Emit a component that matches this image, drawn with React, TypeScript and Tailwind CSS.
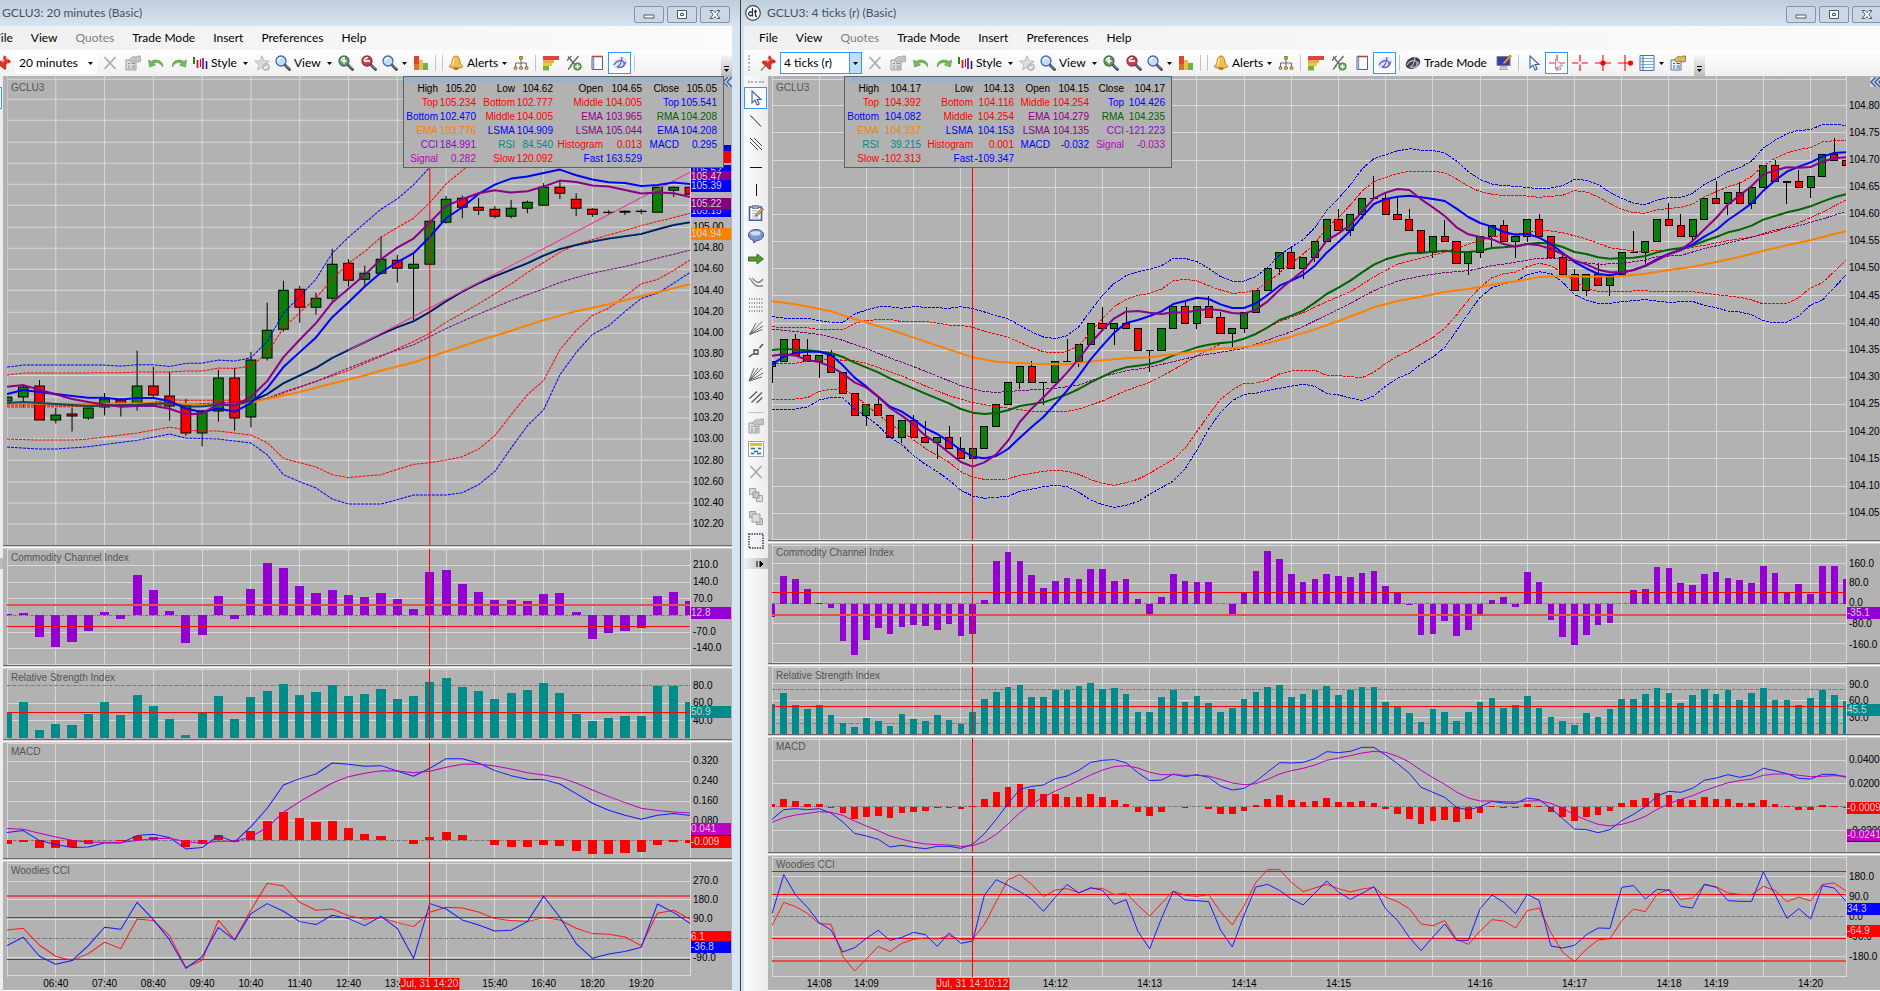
import React from "react";

type Line = { color: string; width?: number; dash?: boolean; points: number[] | string };
type Mark = { text: string; y: number };
type Tag = { text: string; y: number; color: string };
type Level = { y: number; kind: "thin" | "soft" | "dash" };
type Candle = [number, number, number, number, string];
type PanelData = {
  title: string;
  top: number;
  bottom: number;
  rows: number[];
  marks: Mark[];
  tags: Tag[];
  levels?: Level[];
  bars?: { base: number; color: string; ends: number[] };
  candles?: Candle[];
  lines?: Line[];
};
type Cell = [string, string, string];
type ChartData = {
  count: number;
  columnStep: number;
  cross: number;
  panels: PanelData[];
  times: [number, string][];
  crossTime: string;
  legend: Cell[][];
  legendCols: string[];
  legendPos: string;
  axis: string;
};

const BLUE = "#0000ff";
const RED = "#ff0000";
const PURPLE = "#8b008b";
const PLUM = "#800080";
const GREEN = "#006400";
const ORANGE = "#ff8000";
const VIOLET = "#9400d3";
const TEAL = "#008b8b";
const MAGENTA = "#bf00bf";

/* Vertical positions are in thirds of a pixel; horizontal positions are bar numbers. */

const leftCandles: Candle[] = [
  [1192, 1192, 1204, 1204, "g"], [1158, 1162, 1192, 1223, "g"], [1141, 1159, 1261, 1261, "r"], [1225, 1246, 1261, 1271, "g"],
  [1223, 1243, 1249, 1295, "r"], [1225, 1225, 1255, 1260, "g"], [1180, 1198, 1222, 1247, "g"], [1195, 1201, 1219, 1250, "r"],
  [1053, 1159, 1210, 1232, "g"], [1101, 1159, 1186, 1191, "r"], [1116, 1189, 1219, 1263, "r"], [1198, 1219, 1300, 1308, "r"],
  [1230, 1234, 1300, 1340, "g"], [1110, 1135, 1234, 1266, "g"], [1104, 1135, 1255, 1293, "r"], [1056, 1081, 1252, 1283, "g"],
  [909, 991, 1075, 1082, "g"], [843, 871, 988, 995, "g"], [858, 868, 922, 969, "r"], [879, 895, 922, 945, "g"],
  [747, 793, 895, 903, "g"], [778, 790, 841, 860, "r"], [798, 820, 838, 860, "g"], [710, 778, 820, 824, "g"],
  [765, 781, 805, 848, "r"], [762, 793, 805, 960, "g"], [660, 664, 793, 797, "g"], [588, 598, 667, 671, "g"],
  [587, 595, 622, 655, "r"], [594, 622, 631, 645, "r"], [618, 628, 649, 656, "r"], [600, 625, 649, 655, "g"],
  [602, 607, 625, 640, "g"], [549, 562, 616, 617, "g"], [543, 562, 580, 597, "r"], [580, 598, 625, 648, "r"],
  [625, 628, 643, 651, "r"], [631, 637, 638, 642, "g"], [632, 634, 637, 645, "g"], [627, 634, 635, 643, "g"],
  [562, 562, 637, 637, "g"], [560, 562, 571, 591, "g"], [562, 562, 583, 583, "r"],
];

const leftChart: ChartData = {
  count: 42,
  columnStep: 3,
  cross: 26,
  crossTime: "Jul, 31 14:20",
  axis: "w-[42px]",
  legendPos: "left-[400px]",
  legendCols: ["w-[34px]", "w-[38px]", "w-[39px]", "w-[38px]", "w-[50px]", "w-[39px]", "w-[37px]", "w-[38px]"],
  times: [
    [3, "06:40"], [6, "07:40"], [9, "08:40"], [12, "09:40"], [15, "10:40"], [18, "11:40"], [21, "12:40"], [24, "13:40"],
    [30, "15:40"], [33, "16:40"], [36, "18:20"], [39, "19:20"],
  ],
  legend: [
    [["High", "105.20", "#000"], ["Low", "104.62", "#000"], ["Open", "104.65", "#000"], ["Close", "105.05", "#000"]],
    [["Top", "105.234", RED], ["Bottom", "102.777", RED], ["Middle", "104.005", RED], ["Top", "105.541", BLUE]],
    [["Bottom", "102.470", BLUE], ["Middle", "104.005", RED], ["EMA", "103.965", PURPLE], ["RMA", "104.208", GREEN]],
    [["EMA", "103.776", ORANGE], ["LSMA", "104.909", BLUE], ["LSMA", "105.044", PURPLE], ["EMA", "104.208", BLUE]],
    [["CCI", "184.991", VIOLET], ["RSI", "84.540", TEAL], ["Histogram", "0.013", RED], ["MACD", "0.295", BLUE]],
    [["Signal", "0.282", MAGENTA], ["Slow", "120.092", RED], ["Fast", "163.529", BLUE]],
  ],
  panels: [
    {
      title: "GCLU3",
      top: 228,
      bottom: 1635,
      rows: [238, 298, 361, 427, 490, 553, 616, 682, 745, 808, 871, 937, 1000, 1063, 1127, 1192, 1255, 1318, 1382, 1447, 1510, 1573],
      marks: [
        { text: "105.00", y: 682 }, { text: "104.80", y: 745 }, { text: "104.60", y: 808 }, { text: "104.40", y: 874 },
        { text: "104.20", y: 937 }, { text: "104.00", y: 1000 }, { text: "103.80", y: 1063 }, { text: "103.60", y: 1129 },
        { text: "103.40", y: 1192 }, { text: "103.20", y: 1255 }, { text: "103.00", y: 1318 }, { text: "102.80", y: 1384 },
        { text: "102.60", y: 1447 }, { text: "102.40", y: 1510 }, { text: "102.20", y: 1573 },
      ],
      tags: [
        { text: "105.57", y: 453, color: BLUE }, { text: "105.55", y: 471, color: RED }, { text: "105.52", y: 512, color: BLUE },
        { text: "105.47", y: 532, color: PURPLE }, { text: "105.39", y: 557, color: BLUE }, { text: "105.15", y: 634, color: BLUE },
        { text: "105.22", y: 611, color: PLUM }, { text: "104.94", y: 701, color: ORANGE },
      ],
      candles: leftCandles,
      lines: [
        { color: BLUE, dash: true, points: "0,1102 1,1096 6,1096 7,1099 8,1095 9,1095 10,1100 11,1091 12,1090 13,1081 14,1084 15,1074 16,1025 17,940 18,890 19,838 20,760 21,712 22,670 23,628 24,597 25,555 26,502 27,440" },
        { color: RED, dash: true, points: "0,1126 1,1120 7,1119 8,1117 10,1117 11,1114 12,1114 13,1105 14,1106 15,1099 16,1060 17,985 18,938 19,895 20,838 21,790 22,755 23,712 24,683 25,655 26,608 27,552 28,512 29,470" },
        { color: RED, dash: true, points: "37,490 38,500 39,502 40,494" },
        { color: RED, dash: true, points: "0,1222 6,1220 8,1213 10,1201 15,1202 16,1198 17,1180 19,1145 21,1112 23,1070 25,1025 26,1000 27,967 28,940 29,912 30,882 31,852 32,818 33,788 34,757 35,734 36,719 37,705 38,692 39,677 40,665 41,653 42,640" },
        { color: PLUM, dash: true, points: "0,1216 10,1216 15,1205 16,1195 17,1177 19,1145 21,1105 23,1067 25,1035 27,986 29,943 31,902 33,867 34,848 35,833 36,820 38,800 40,775 42,751" },
        { color: RED, dash: true, points: "0,1318 2,1321 4,1321 5,1318 6,1312 7,1306 8,1300 9,1291 10,1282 11,1291 12,1294 13,1294 14,1300 15,1306 16,1329 17,1376 18,1389 19,1402 20,1425 21,1434 22,1429 23,1425 24,1409 25,1394 26,1389 27,1381 28,1371 29,1348 30,1308 31,1245 32,1185 33,1142 34,1050 35,992 36,947 37,925 38,889 39,852 40,839 41,812 42,780" },
        { color: BLUE, dash: true, points: "0,1342 2,1348 3,1348 5,1341 7,1328 8,1322 10,1303 11,1315 13,1318 15,1330 16,1365 17,1425 18,1446 19,1465 20,1498 21,1513 23,1513 24,1500 25,1486 27,1486 28,1479 29,1455 30,1415 31,1345 32,1278 33,1230 34,1125 35,1058 36,1004 37,978 38,935 39,896 40,880 41,850 42,818" },
        { color: ORANGE, width: 2, points: "0,1211 5,1213 10,1210 12,1215 14,1215 15,1208 16,1198 18,1177 20,1151 22,1127 23,1112 25,1088 27,1055 29,1023 31,993 33,961 35,934 37,913 39,889 42,853" },
        { color: "#005060", width: 2, points: "0,1210 1,1207 3,1213 5,1219 8,1215 10,1210 11,1220 12,1220 13,1214 14,1216 15,1204 16,1183 17,1150 19,1104 20,1074 22,1027 23,1003 24,982 25,964 26,936 27,904 28,875 29,850 30,829 32,790 33,767 34,747 35,735 36,725 37,716 39,702 40,688 41,675 42,667" },
        { color: "#000080", width: 1, points: "15,1205 16,1184 17,1151 19,1105 20,1075 22,1028 23,1004 24,983 25,965 26,937 27,905 28,876 29,851 30,830 32,791 33,768 34,748 35,736 36,726 37,717 39,703 40,689 41,676 42,668" },
        { color: "#f03090", width: 1, points: "21,1052 42,517" },
        { color: BLUE, width: 2, points: "0,1183 1,1171 2,1177 4,1189 5,1194 6,1194 7,1199 8,1195 9,1195 10,1204 11,1227 12,1237 13,1226 14,1236 15,1210 16,1165 17,1102 18,1057 19,1013 20,952 21,907 22,860 23,818 24,787 25,760 26,711 27,655 28,622 29,582 30,554 31,536 32,530 33,519 34,509 35,526 36,539 37,547 38,549 39,558 40,555 41,548 42,552" },
        { color: PURPLE, width: 2, points: "0,1161 1,1156 2,1170 4,1198 5,1207 6,1214 7,1221 8,1219 9,1218 10,1227 11,1244 12,1241 13,1213 14,1218 15,1191 16,1144 17,1072 18,1020 19,970 20,908 21,867 22,825 23,778 24,743 25,716 26,668 27,618 28,598 29,580 30,571 31,578 32,574 33,560 34,542 35,546 36,557 37,560 38,570 39,581 40,578 41,580 42,591" },
      ],
    },
    {
      title: "Commodity Channel Index",
      top: 27,
      bottom: 375,
      rows: [30, 76, 127, 176, 277, 325, 373],
      marks: [{ text: "210.0", y: 76 }, { text: "140.0", y: 127 }, { text: "70.0", y: 178 }, { text: "-70.0", y: 277 }, { text: "-140.0", y: 325 }],
      tags: [{ text: "12.8", y: 219, color: VIOLET }],
      levels: [{ y: 226, kind: "dash" }, { y: 195, kind: "soft" }, { y: 259, kind: "thin" }],
      bars: {
        base: 225,
        color: VIOLET,
        ends: [222, 219, 291, 321, 306, 273, 216, 237, 105, 150, 213, 309, 285, 168, 237, 147, 69, 84, 138, 159, 150, 165, 171, 159, 177, 207, 96, 90, 132, 156, 180, 180, 183, 162, 159, 216, 297, 279, 273, 264, 168, 156, 183],
      },
    },
    {
      title: "Relative Strength Index",
      top: 387,
      bottom: 597,
      rows: [389, 490, 543],
      marks: [{ text: "80.0", y: 440 }, { text: "60.0", y: 490 }, { text: "40.0", y: 545 }],
      tags: [{ text: "50.9", y: 516, color: TEAL }],
      levels: [{ y: 436, kind: "dash" }, { y: 517, kind: "thin" }],
      bars: {
        base: 595,
        color: TEAL,
        ends: [517, 486, 570, 552, 555, 522, 486, 525, 465, 498, 537, 585, 518, 468, 537, 471, 453, 432, 465, 456, 435, 468, 462, 447, 477, 468, 426, 414, 441, 453, 477, 459, 450, 429, 459, 522, 543, 534, 528, 528, 437, 437, 486],
      },
    },
    {
      title: "MACD",
      top: 607,
      bottom: 954,
      rows: [609, 664, 722, 782, 840],
      marks: [{ text: "0.320", y: 664 }, { text: "0.240", y: 724 }, { text: "0.160", y: 783 }, { text: "0.080", y: 842 }],
      tags: [{ text: "0.032", y: 876, color: BLUE }, { text: "-0.009", y: 906, color: RED }, { text: "0.041", y: 868, color: MAGENTA }],
      levels: [{ y: 899, kind: "dash" }],
      bars: {
        base: 899,
        color: RED,
        ends: [909, 903, 921, 921, 920, 911, 897, 901, 885, 888, 899, 918, 909, 882, 903, 870, 840, 813, 831, 843, 840, 861, 879, 885, 897, 909, 888, 873, 882, 899, 912, 918, 918, 912, 915, 930, 939, 939, 936, 933, 912, 903, 906],
      },
      lines: [
        { color: "#1a1aff", points: [876, 870, 900, 912, 921, 919, 907, 907, 885, 881, 891, 925, 921, 885, 904, 858, 803, 733, 714, 700, 667, 671, 677, 675, 691, 707, 683, 654, 654, 667, 690, 705, 716, 717, 730, 759, 788, 809, 824, 836, 824, 819, 825] },
        { color: MAGENTA, points: [864, 866, 878, 889, 899, 905, 905, 906, 900, 894, 893, 903, 908, 902, 902, 889, 860, 815, 783, 755, 727, 708, 698, 690, 691, 696, 692, 680, 671, 670, 676, 685, 696, 703, 711, 727, 748, 768, 786, 803, 810, 814, 817] },
      ],
    },
    {
      title: "Woodies CCI",
      top: 966,
      bottom: 1311,
      rows: [971, 1024, 1080, 1138, 1252, 1308],
      marks: [{ text: "270.0", y: 1024 }, { text: "180.0", y: 1081 }, { text: "90.0", y: 1138 }, { text: "-90.0", y: 1253 }],
      tags: [{ text: "6.1", y: 1192, color: RED }, { text: "-36.8", y: 1220, color: BLUE }],
      levels: [{ y: 1195, kind: "dash" }, { y: 1068, kind: "soft" }, { y: 1132, kind: "thin" }, { y: 1258, kind: "thin" }],
      lines: [
        { color: "#ff1a1a", points: [1170, 1165, 1216, 1249, 1262, 1241, 1207, 1226, 1137, 1142, 1187, 1283, 1261, 1141, 1199, 1110, 1030, 1038, 1087, 1111, 1107, 1127, 1138, 1133, 1148, 1160, 1117, 1102, 1104, 1116, 1136, 1142, 1145, 1133, 1140, 1165, 1181, 1183, 1191, 1217, 1120, 1111, 1138] },
        { color: "#1a1aff", points: [1217, 1192, 1249, 1273, 1262, 1217, 1162, 1168, 1087, 1139, 1200, 1285, 1250, 1163, 1200, 1121, 1091, 1114, 1145, 1154, 1126, 1136, 1157, 1129, 1165, 1256, 1091, 1107, 1140, 1155, 1173, 1171, 1145, 1069, 1132, 1211, 1255, 1242, 1235, 1222, 1092, 1118, 1150] },
      ],
    },
  ],
};

const rightCandles: Candle[] = [
  [1084, 1084, 1099, 1148, "g"], [1018, 1018, 1084, 1084, "g"], [1003, 1018, 1066, 1066, "r"], [1018, 1066, 1084, 1084, "r"],
  [1066, 1066, 1084, 1133, "g"], [1051, 1066, 1117, 1117, "r"], [1117, 1117, 1180, 1180, "r"], [1180, 1180, 1246, 1246, "r"],
  [1213, 1213, 1246, 1277, "g"], [1188, 1213, 1246, 1246, "r"], [1246, 1246, 1312, 1312, "r"], [1261, 1261, 1312, 1328, "g"],
  [1245, 1261, 1312, 1312, "r"], [1263, 1312, 1327, 1327, "r"], [1312, 1312, 1327, 1377, "g"], [1278, 1312, 1345, 1345, "r"],
  [1311, 1345, 1375, 1375, "r"], [1345, 1345, 1375, 1375, "g"], [1279, 1279, 1345, 1345, "g"], [1213, 1213, 1279, 1279, "g"],
  [1147, 1147, 1213, 1213, "g"], [1099, 1099, 1147, 1166, "g"], [1083, 1099, 1147, 1147, "r"], [1147, 1147, 1148, 1215, "g"],
  [1084, 1084, 1147, 1147, "g"], [1018, 1084, 1085, 1085, "g"], [1033, 1033, 1084, 1101, "g"], [970, 970, 1033, 1033, "g"],
  [921, 970, 985, 985, "r"], [970, 970, 985, 1034, "g"], [921, 970, 985, 985, "r"], [985, 985, 1051, 1051, "r"],
  [1051, 1051, 1052, 1115, "g"], [985, 985, 1051, 1051, "g"], [919, 919, 985, 985, "g"], [904, 919, 970, 970, "r"],
  [919, 919, 970, 986, "g"], [888, 919, 952, 952, "r"], [937, 952, 1000, 1000, "r"], [985, 985, 1000, 1048, "g"],
  [937, 937, 985, 1000, "g"], [871, 871, 937, 937, "g"], [805, 805, 871, 871, "g"], [757, 757, 805, 824, "g"],
  [742, 757, 805, 805, "r"], [772, 772, 805, 838, "g"], [724, 724, 772, 787, "g"], [658, 658, 724, 724, "g"],
  [627, 658, 691, 691, "r"], [643, 643, 691, 707, "g"], [595, 595, 643, 658, "g"], [528, 595, 596, 596, "g"],
  [578, 595, 643, 643, "r"], [592, 643, 658, 658, "r"], [627, 658, 691, 691, "r"], [691, 691, 757, 757, "r"],
  [709, 709, 757, 773, "g"], [660, 709, 724, 724, "r"], [724, 724, 790, 790, "r"], [757, 757, 790, 825, "g"],
  [709, 709, 757, 773, "g"], [676, 676, 709, 742, "g"], [660, 676, 724, 724, "r"], [709, 709, 724, 773, "g"],
  [658, 658, 709, 725, "g"], [643, 658, 709, 709, "r"], [709, 709, 772, 772, "r"], [757, 772, 823, 823, "r"],
  [807, 823, 871, 871, "r"], [823, 823, 871, 888, "g"], [790, 823, 856, 856, "r"], [823, 826, 856, 888, "g"],
  [757, 757, 823, 823, "g"], [693, 757, 758, 758, "g"], [724, 724, 757, 792, "g"], [658, 658, 724, 724, "g"],
  [609, 658, 676, 676, "r"], [643, 676, 709, 709, "r"], [658, 658, 709, 725, "g"], [595, 595, 658, 658, "g"],
  [543, 595, 610, 610, "r"], [577, 577, 610, 644, "g"], [545, 577, 610, 610, "r"], [562, 562, 610, 627, "g"],
  [496, 496, 562, 562, "g"], [480, 496, 545, 545, "r"], [545, 545, 546, 611, "g"], [510, 544, 562, 562, "r"],
  [529, 529, 562, 593, "g"], [463, 463, 529, 529, "g"], [414, 463, 481, 481, "r"], [481, 481, 496, 496, "r"],
];

const rightChart: ChartData = {
  count: 91,
  columnStep: 4,
  cross: 17,
  crossTime: "Jul, 31 14:10:12",
  axis: "w-[38px]",
  legendPos: "left-[76px]",
  legendCols: ["w-[34px]", "w-[42px]", "w-[52px]", "w-[41px]", "w-[36px]", "w-[39px]", "w-[35px]", "w-[41px]"],
  times: [
    [4, "14:08"], [8, "14:09"], [24, "14:12"], [32, "14:13"], [40, "14:14"], [48, "14:15"], [60, "14:16"], [68, "14:17"],
    [76, "14:18"], [80, "14:19"], [88, "14:20"],
  ],
  legend: [
    [["High", "104.17", "#000"], ["Low", "104.13", "#000"], ["Open", "104.15", "#000"], ["Close", "104.17", "#000"]],
    [["Top", "104.392", RED], ["Bottom", "104.116", RED], ["Middle", "104.254", RED], ["Top", "104.426", BLUE]],
    [["Bottom", "104.082", BLUE], ["Middle", "104.254", RED], ["EMA", "104.279", PURPLE], ["RMA", "104.235", GREEN]],
    [["EMA", "104.337", ORANGE], ["LSMA", "104.153", BLUE], ["LSMA", "104.135", PURPLE], ["CCI", "-121.223", VIOLET]],
    [["RSI", "39.215", TEAL], ["Histogram", "0.001", RED], ["MACD", "-0.032", BLUE], ["Signal", "-0.033", MAGENTA]],
    [["Slow", "-102.313", RED], ["Fast", "-109.347", BLUE]],
  ],
  panels: [
    {
      title: "GCLU3",
      top: 228,
      bottom: 1620,
      rows: [238, 317, 398, 481, 562, 643, 724, 805, 887, 970, 1051, 1132, 1213, 1295, 1376, 1459, 1540, 1618],
      marks: [
        { text: "104.80", y: 317 }, { text: "104.75", y: 400 }, { text: "104.70", y: 481 }, { text: "104.65", y: 562 },
        { text: "104.60", y: 643 }, { text: "104.55", y: 724 }, { text: "104.50", y: 805 }, { text: "104.45", y: 889 },
        { text: "104.40", y: 970 }, { text: "104.35", y: 1051 }, { text: "104.30", y: 1132 }, { text: "104.25", y: 1213 },
        { text: "104.20", y: 1297 }, { text: "104.15", y: 1378 }, { text: "104.10", y: 1459 }, { text: "104.05", y: 1540 },
      ],
      tags: [],
      candles: rightCandles,
      lines: [
        { color: BLUE, dash: true, points: "0,950 1,954 3,954 4,962 5,967 6,967 7,942 8,930 9,921 10,920 11,925 12,920 15,925 16,920 17,926 18,936 20,957 21,976 22,996 23,1011 24,1016 25,1007 26,980 27,932 28,886 29,850 30,827 31,815 32,808 33,797 34,775 35,775 36,785 37,805 38,830 39,843 40,843 41,830 42,802 43,765 44,741 45,719 46,683 47,631 48,595 49,555 50,507 51,476 52,464 53,453 54,446 55,451 56,452 57,459 58,483 59,515 60,539 61,552 62,557 63,559 65,566 66,564 67,557 68,538 69,541 70,553 71,577 72,595 73,610 74,614 75,600 76,593 77,592 78,580 79,553 80,536 81,515 82,503 83,483 84,444 85,420 86,401 87,391 88,389 89,373 90,373 91,376" },
        { color: RED, dash: true, points: "0,980 1,983 3,983 4,989 6,989 7,970 8,961 10,958 11,965 13,964 15,975 16,976 17,982 18,994 20,1012 21,1027 22,1043 23,1055 24,1059 25,1055 26,1036 27,997 28,956 29,920 30,898 31,886 32,880 33,867 34,843 35,838 36,843 37,857 38,870 39,880 40,878 41,870 42,848 43,818 44,790 45,763 46,730 47,683 48,653 49,615 50,573 51,545 52,532 53,521 54,514 56,514 57,518 58,537 59,559 60,575 61,583 62,587 64,588 65,592 66,589 67,586 68,572 69,576 70,591 71,611 72,628 73,638 74,640 75,629 77,622 78,613 79,591 80,575 81,560 82,550 83,529 84,497 85,475 86,459 87,448 88,443 89,426 90,422 91,422" },
        { color: RED, dash: true, points: "0,1090 2,1090 3,1083 5,1078 7,1083 8,1090 9,1102 11,1128 13,1158 15,1187 17,1208 19,1220 21,1229 22,1234 25,1234 26,1227 28,1203 30,1172 32,1147 34,1110 36,1067 38,1032 39,1025 40,1016 41,1000 43,965 45,938 47,905 49,875 51,831 53,792 55,775 57,757 59,733 61,710 62,706 64,698 65,690 66,693 67,698 69,717 71,743 73,753 74,754 75,752 77,748 79,736 81,722 83,711 85,695 87,668 89,637 91,600" },
        { color: PLUM, dash: true, points: "0,987 2,995 4,1003 6,1021 8,1046 10,1074 12,1100 14,1128 16,1157 18,1175 19,1177 21,1172 24,1165 26,1155 28,1130 30,1112 32,1102 34,1085 36,1068 38,1057 40,1045 42,1020 44,995 45,980 47,945 49,910 51,872 53,843 55,828 57,818 59,812 61,797 63,787 65,774 66,774 67,777 68,784 70,793 72,790 74,780 75,770 77,766 79,746 81,729 83,712 85,690 87,677 89,657 91,634" },
        { color: RED, dash: true, points: "0,1197 2,1197 3,1193 4,1174 5,1168 6,1166 7,1187 8,1215 9,1244 10,1272 11,1295 13,1345 15,1387 16,1415 17,1432 18,1438 20,1437 21,1426 23,1414 24,1411 25,1414 26,1423 27,1439 28,1450 29,1456 30,1448 31,1438 32,1420 33,1398 34,1378 35,1345 36,1295 37,1245 38,1198 39,1170 40,1150 41,1149 42,1140 43,1122 44,1113 46,1111 47,1126 48,1127 49,1130 50,1133 51,1117 52,1090 53,1068 54,1053 55,1032 56,1012 57,985 58,945 59,900 60,862 61,833 62,821 63,817 64,800 65,790 66,797 67,818 68,844 69,865 70,874 72,874 74,872 75,875 78,875 80,884 82,892 83,900 84,912 86,911 87,892 88,864 89,848 90,815 91,781" },
        { color: BLUE, dash: true, points: "0,1228 2,1227 3,1221 4,1200 5,1192 6,1193 7,1227 8,1250 9,1277 10,1312 11,1334 12,1367 13,1393 14,1415 15,1440 16,1471 17,1488 18,1495 20,1489 21,1474 23,1460 24,1456 25,1460 26,1477 27,1500 28,1514 29,1522 30,1516 31,1505 32,1483 33,1463 34,1443 35,1407 36,1350 37,1287 38,1237 39,1202 40,1183 41,1180 42,1171 43,1165 45,1152 46,1159 47,1181 48,1185 49,1194 50,1202 51,1188 52,1158 53,1135 54,1120 55,1092 56,1071 57,1042 58,992 59,940 60,892 61,863 62,851 63,844 64,824 65,815 66,821 67,847 68,884 69,900 70,910 71,910 72,905 74,899 76,907 78,904 79,916 80,923 81,933 82,936 83,944 84,962 85,969 86,966 87,948 88,915 89,900 90,863 91,825" },
        { color: GREEN, width: 2, points: "0,1050 1,1047 3,1051 5,1059 6,1071 7,1088 9,1117 10,1135 13,1181 15,1210 16,1227 17,1238 18,1242 19,1239 20,1231 21,1218 23,1207 24,1195 25,1183 26,1167 27,1147 28,1130 29,1113 30,1102 31,1097 32,1092 33,1082 34,1066 35,1054 36,1042 37,1034 38,1029 39,1026 40,1016 41,1002 42,982 43,960 44,947 45,932 46,908 47,882 48,863 49,842 50,817 51,794 52,778 53,768 54,760 55,759 56,755 57,752 58,756 59,756 60,752 61,744 62,742 63,739 64,732 65,728 66,731 67,741 68,756 69,762 70,772 71,776 72,774 73,773 74,768 75,757 76,749 77,744 78,737 79,723 80,711 81,697 82,689 83,677 84,659 86,637 87,629 88,619 89,605 90,592 91,583" },
        { color: ORANGE, width: 2, points: "0,904 2,913 5,934 7,957 10,989 13,1025 16,1060 17,1072 19,1085 22,1091 25,1093 26,1088 28,1081 30,1075 32,1072 34,1063 36,1054 38,1046 40,1042 42,1029 44,1010 46,988 48,963 50,936 51,922 53,903 55,890 57,876 59,867 61,854 63,844 65,831 67,828 69,830 72,828 74,821 76,810 78,800 80,786 82,771 84,752 86,736 88,721 90,702 91,694" },
        {
          color: BLUE,
          width: 2,
          points: [1093, 1070, 1058, 1055, 1055, 1065, 1096, 1133, 1160, 1190, 1220, 1235, 1258, 1285, 1302, 1325, 1350, 1370, 1375, 1368, 1347, 1313, 1281, 1251, 1212, 1172, 1127, 1078, 1037, 998, 969, 960, 948, 934, 912, 903, 893, 897, 913, 924, 924, 910, 885, 857, 842, 825, 797, 758, 726, 692, 650, 612, 597, 590, 587, 592, 597, 603, 626, 651, 669, 680, 696, 704, 702, 713, 732, 759, 786, 805, 822, 826, 818, 810, 797, 777, 761, 750, 733, 710, 690, 660, 636, 610, 572, 541, 515, 500, 487, 470, 459, 457],
        },
        {
          color: PURPLE,
          width: 2,
          points: [1067, 1063, 1067, 1080, 1086, 1100, 1121, 1147, 1163, 1190, 1224, 1247, 1274, 1307, 1330, 1358, 1386, 1400, 1387, 1363, 1322, 1266, 1226, 1192, 1155, 1118, 1076, 1030, 990, 955, 935, 933, 938, 942, 937, 938, 931, 927, 931, 939, 941, 929, 904, 870, 840, 812, 770, 722, 700, 675, 635, 595, 578, 567, 570, 598, 622, 648, 682, 703, 711, 718, 732, 740, 732, 736, 747, 762, 781, 793, 809, 817, 817, 810, 798, 780, 763, 750, 723, 688, 654, 613, 586, 558, 523, 511, 502, 503, 501, 485, 475, 472],
        },
      ],
    },
    {
      title: "Commodity Channel Index",
      top: 12,
      bottom: 369,
      rows: [15, 70, 130, 250, 310, 367],
      marks: [{ text: "160.0", y: 71 }, { text: "80.0", y: 130 }, { text: "0.0", y: 190 }, { text: "-80.0", y: 251 }, { text: "-160.0", y: 314 }],
      tags: [{ text: "-35.1", y: 218, color: VIOLET }],
      levels: [{ y: 190, kind: "dash" }, { y: 157, kind: "thin" }, { y: 225, kind: "soft" }],
      bars: {
        base: 191,
        color: VIOLET,
        ends: [230, 108, 117, 147, 189, 204, 303, 345, 300, 264, 282, 261, 255, 258, 270, 252, 288, 282, 180, 63, 36, 63, 105, 144, 123, 114, 117, 87, 87, 123, 117, 177, 222, 171, 102, 123, 126, 126, 191, 225, 157, 93, 33, 57, 102, 126, 117, 102, 108, 111, 99, 93, 138, 158, 195, 285, 282, 243, 288, 270, 222, 180, 171, 201, 96, 126, 240, 291, 315, 285, 255, 249, 191, 150, 147, 81, 84, 129, 135, 102, 96, 114, 120, 129, 78, 99, 158, 132, 162, 78, 78, 117],
      },
    },
    {
      title: "Relative Strength Index",
      top: 381,
      bottom: 582,
      rows: [383, 431, 482, 532],
      marks: [{ text: "90.0", y: 434 }, { text: "60.0", y: 482 }, { text: "30.0", y: 535 }],
      tags: [{ text: "45.5", y: 509, color: TEAL }],
      levels: [{ y: 448, kind: "dash" }, { y: 550, kind: "dash" }, { y: 499, kind: "thin" }],
      bars: {
        base: 582,
        color: TEAL,
        ends: [492, 459, 495, 507, 495, 525, 549, 561, 534, 543, 558, 522, 537, 543, 525, 540, 552, 516, 477, 456, 441, 435, 471, 471, 450, 450, 438, 429, 447, 444, 462, 516, 516, 471, 450, 486, 468, 489, 516, 504, 477, 456, 441, 435, 471, 462, 450, 438, 465, 450, 441, 441, 486, 500, 519, 546, 507, 516, 543, 516, 486, 474, 504, 495, 468, 504, 531, 543, 555, 519, 531, 507, 477, 477, 462, 444, 459, 489, 465, 447, 462, 450, 480, 459, 444, 480, 480, 495, 474, 450, 465, 484],
      },
    },
    {
      title: "MACD",
      top: 594,
      bottom: 936,
      rows: [597, 661, 731, 871],
      marks: [{ text: "0.0400", y: 661 }, { text: "0.0200", y: 733 }, { text: "-0.0200", y: 872 }],
      tags: [{ text: "-0.0009", y: 805, color: RED }, { text: "-0.0250", y: 889, color: BLUE }, { text: "-0.0241", y: 885, color: MAGENTA }],
      levels: [{ y: 800, kind: "dash" }],
      bars: {
        base: 800,
        color: RED,
        ends: [792, 777, 783, 792, 792, 803, 819, 837, 831, 828, 834, 819, 816, 813, 803, 803, 806, 798, 777, 756, 741, 732, 747, 762, 762, 771, 771, 762, 771, 780, 792, 816, 828, 816, 800, 803, 800, 806, 822, 822, 813, 795, 777, 765, 780, 786, 783, 774, 786, 786, 783, 789, 806, 822, 837, 852, 843, 840, 846, 837, 819, 798, 803, 803, 792, 798, 816, 831, 843, 831, 825, 813, 789, 780, 774, 759, 765, 777, 780, 771, 777, 777, 789, 789, 780, 792, 798, 809, 809, 795, 798, 803],
      },
      lines: [
        { color: "#1a1aff", points: [838, 809, 806, 809, 806, 819, 846, 880, 888, 898, 921, 916, 922, 926, 919, 919, 925, 913, 881, 838, 791, 748, 739, 735, 716, 708, 691, 667, 661, 659, 668, 698, 722, 720, 702, 710, 704, 712, 738, 750, 745, 724, 696, 668, 669, 667, 656, 635, 638, 634, 622, 622, 645, 671, 700, 742, 757, 772, 802, 810, 800, 784, 789, 790, 774, 779, 805, 836, 867, 869, 878, 869, 842, 823, 800, 768, 754, 757, 745, 721, 714, 704, 712, 705, 685, 692, 701, 715, 717, 703, 703, 712] },
        { color: MAGENTA, points: [847, 833, 825, 820, 815, 817, 826, 843, 858, 872, 888, 898, 906, 912, 914, 915, 919, 917, 905, 883, 852, 818, 792, 772, 753, 738, 722, 705, 690, 680, 677, 684, 697, 704, 704, 706, 706, 708, 718, 729, 734, 731, 718, 702, 692, 685, 675, 661, 654, 647, 639, 634, 637, 649, 666, 691, 713, 733, 756, 774, 783, 783, 785, 786, 783, 782, 790, 805, 825, 840, 853, 858, 853, 843, 829, 808, 791, 778, 767, 752, 740, 728, 722, 717, 706, 702, 702, 706, 710, 709, 707, 709] },
      ],
    },
    {
      title: "Woodies CCI",
      top: 948,
      bottom: 1311,
      rows: [952, 1009, 1071, 1189, 1249, 1308],
      marks: [{ text: "180.0", y: 1010 }, { text: "90.0", y: 1070 }, { text: "0.0", y: 1130 }, { text: "-90.0", y: 1190 }, { text: "-180.0", y: 1251 }],
      tags: [{ text: "34.3", y: 1106, color: BLUE }, { text: "-64.9", y: 1172, color: RED }],
      levels: [{ y: 1129, kind: "dash" }, { y: 995, kind: "thin" }, { y: 1062, kind: "thin" }, { y: 1195, kind: "thin" }, { y: 1263, kind: "soft" }],
      lines: [
        { color: "#ff1a1a", points: [1157, 1087, 1100, 1120, 1151, 1153, 1250, 1293, 1257, 1219, 1235, 1210, 1198, 1194, 1197, 1187, 1198, 1198, 1153, 1085, 1019, 1004, 1033, 1070, 1050, 1046, 1058, 1045, 1045, 1064, 1059, 1096, 1128, 1090, 1053, 1066, 1069, 1064, 1115, 1155, 1097, 1027, 989, 989, 1027, 1055, 1044, 1033, 1046, 1056, 1047, 1042, 1071, 1085, 1106, 1152, 1157, 1142, 1198, 1213, 1173, 1139, 1143, 1164, 1112, 1104, 1178, 1237, 1265, 1227, 1200, 1196, 1142, 1107, 1115, 1062, 1048, 1078, 1074, 1035, 1040, 1059, 1063, 1064, 1039, 1052, 1085, 1071, 1083, 1033, 1029, 1053] },
        { color: "#1a1aff", points: [1121, 1004, 1065, 1102, 1148, 1170, 1236, 1223, 1195, 1171, 1201, 1192, 1177, 1184, 1219, 1179, 1210, 1203, 1065, 1019, 1036, 1055, 1077, 1114, 1072, 1033, 1059, 1043, 1051, 1093, 1079, 1174, 1226, 1135, 1054, 1080, 1082, 1085, 1170, 1221, 1125, 1041, 1033, 1051, 1077, 1095, 1059, 1023, 1056, 1078, 1060, 1040, 1107, 1141, 1192, 1232, 1191, 1152, 1201, 1201, 1106, 1065, 1087, 1121, 1063, 1081, 1218, 1224, 1216, 1184, 1164, 1165, 1042, 1037, 1077, 1048, 1051, 1099, 1104, 1032, 1042, 1082, 1084, 1084, 996, 1065, 1135, 1106, 1137, 1037, 1044, 1084] },
      ],
    },
  ],
};

/* ---------- icons ---------- */

function Svg({ children, className = "size-4" }: { children: React.ReactNode; className?: string }) {
  return (
    <svg viewBox="0 0 16 16" className={className + " shrink-0"} fill="none" aria-hidden="true">
      {children}
    </svg>
  );
}

function lens(sign: React.ReactNode, fill: string, ring: string) {
  return (
    <Svg>
      <path d="M10 10l4.500 4.500" stroke="#3a4568" strokeWidth="2.800" strokeLinecap="round" />
      <path d="M10.500 10l3.800 3.800" stroke="#c9a866" strokeWidth="1" />
      <circle cx="6" cy="6" r="5" fill={fill} stroke={ring} strokeWidth="1.300" />
      <path d="M3 5.500a3.200 3.200 0 0 1 4-2.600" stroke="#fff" strokeWidth="1.500" />
      {sign}
    </Svg>
  );
}

const dtLogo = (dark: boolean) => (
  <Svg>
    <ellipse cx="8" cy="8" rx="7.500" ry="5.500" fill={dark ? "#3a3f4a" : "#dfe4fb"} transform="rotate(-25 8 8)" />
    <path d="M5.500 12c2-1 4-4 4.500-10M2 10c3-5 9-6 10-2s-6 6-7 3M9 12.500c3-.500 4-3 4.500-6" stroke={dark ? "#b4bac8" : "#5a5fb8"} strokeWidth="1.200" />
  </Svg>
);

const properties = (color: boolean) => (
  <Svg>
    <path d="M1 5h10v10H1z" fill={color ? "#eef3fb" : "#dedede"} stroke={color ? "#5874a8" : "#9d9d9d"} />
    <path d="M3 8.500h2M3 11h2M3 13h2M6.500 8.500H10M6.500 11H10M6.500 13H10" stroke={color ? "#3b5ea5" : "#8f8f8f"} />
    <path d="M4 5l4-3.500 3 .500 2-1h2.500v5.500L12 7l-2-1-3 1.500z" fill={color ? "#e0b860" : "#c4c4c4"} stroke={color ? "#8a6a20" : "#a0a0a0"} strokeWidth=".800" />
  </Svg>
);

const cursor = (
  <Svg>
    <path d="M4 1v12l3-2.800 2 4.800 2.200-1-2-4.500H13z" fill="#f3f6fa" stroke="#44618c" strokeWidth="1.100" />
  </Svg>
);

const crossHair = (dot: React.ReactNode) => (
  <Svg>
    <path d="M8 0v6.500M8 9.500v6.500M0 8h6.500M9.500 8h6.500" stroke="#ff0000" strokeWidth="1.200" />
    {dot}
  </Svg>
);

const icons: Record<string, React.ReactNode> = {
  pin: (
    <Svg>
      <path d="M5.500 10.500L1 15.500" stroke="#777" strokeWidth="1.200" />
      <path d="M9.500 .800L15.500 6.500l-1.300 1.500-1.500-.400-2 2.400.300 3.500-1.500 1L2 7.500l1.200-1.500 3.500.200L9 4 8.500 2.300z" fill="#de3226" stroke="#a01c14" strokeWidth=".700" />
      <path d="M9.500 4.500l-2.500 2.500M11 2.500l2 2" stroke="#ffb4ac" strokeWidth="1.400" />
    </Svg>
  ),
  close: (
    <Svg>
      <path d="M2.500 2l11 12M13.500 2l-11 12" stroke="#a8a8a8" strokeWidth="1.600" />
    </Svg>
  ),
  props: properties(false),
  propsColor: properties(true),
  undo: (
    <Svg>
      <path d="M.500 5l1 7 6-2-2.200-1.600C9 6.500 13 8 14.500 12 16 7.500 10 2.500 3 6.500z" fill="#77b85e" stroke="#4f9440" strokeWidth=".600" />
    </Svg>
  ),
  redo: (
    <Svg>
      <path d="M15.500 5l-1 7-6-2 2.200-1.600C7 6.500 3 8 1.500 12 0 7.500 6 2.500 13 6.500z" fill="#77b85e" stroke="#4f9440" strokeWidth=".600" />
    </Svg>
  ),
  style: (
    <Svg>
      <path d="M2 2v7" stroke="#0a7a0a" strokeWidth="1.800" />
      <path d="M5.500 5v8" stroke="#e01414" strokeWidth="1.800" />
      <path d="M8.500 4v8" stroke="#c01010" strokeWidth="1" />
      <path d="M11 3v11" stroke="#8b1c8b" strokeWidth="1.800" />
      <path d="M14.500 6v8" stroke="#1c1c8c" strokeWidth="1.600" />
    </Svg>
  ),
  star: (
    <Svg>
      <path d="M8 .800l2 5 5.300.400-4 3.500 1.300 5.300L8 12.200 3.400 15l1.300-5.300-4-3.500L6 5.800z" fill="#dcdcdc" stroke="#b0b0b0" strokeWidth=".800" />
      <circle cx="12" cy="12" r="3.500" fill="#c4c4c4" stroke="#a6a6a6" strokeWidth=".600" />
      <path d="M10.300 12l1.300 1.400 2.200-2.800" stroke="#fff" strokeWidth="1.200" />
    </Svg>
  ),
  lens: lens(null, "#c4def6", "#4668ac"),
  zoomIn: lens(<path d="M6 3.500v5M3.500 6h5" stroke="#fff" strokeWidth="1.500" />, "#6c9c62", "#4a6e50"),
  zoomOut: lens(<path d="M3 6h6" stroke="#fff" strokeWidth="1.800" />, "#d04048", "#8a3440"),
  blocks: (
    <Svg>
      <path d="M1 1h5v14H1z" fill="#dc4434" />
      <path d="M6 5h4v10H6z" fill="#e8bd4a" />
      <path d="M10 8h5v7h-5z" fill="#74b048" />
      <path d="M1 9h5v6H1z" fill="#d8743a" />
    </Svg>
  ),
  bell: (
    <Svg>
      <path d="M8 1c3 0 3.500 3 4 6 .300 2 1 3 3 4.500-3 2.500-11 2.500-14 0C3 10 3.700 9 4 7c.500-3 1-6 4-6z" fill="#f0bd4e" stroke="#a8781e" strokeWidth=".900" />
      <path d="M6 3.500C5.500 6 5.500 8 4.500 10" stroke="#fff0b8" strokeWidth="1.300" />
      <ellipse cx="8" cy="13.500" rx="2.500" ry="1.500" fill="#b47618" />
    </Svg>
  ),
  tree: (
    <Svg>
      <path d="M8 4v4M2.500 12V8h11v4M8 8v4" stroke="#5a5a5a" strokeWidth=".900" />
      <path d="M6.700 1.500h2.600v2.600H6.700z" fill="#f0c040" stroke="#8a6a10" />
      <path d="M1.200 12h2.600v2.200H1.200zM6.700 12h2.600v2.200H6.700zM12.200 12h2.600v2.200h-2.600z" fill="#f6e6b8" stroke="#7a6020" strokeWidth=".900" />
    </Svg>
  ),
  profile: (
    <Svg>
      <path d="M0 1h16v4H0z" fill="#d9463c" />
      <path d="M0 5h11v3H0z" fill="#eda842" />
      <path d="M0 8h9v3H0z" fill="#dfcb46" />
      <path d="M0 11h6v4.500H0z" fill="#74b33c" />
    </Svg>
  ),
  tools: (
    <Svg>
      <path d="M2 1.500l9 11M12.500 1L4 11.500M1 5.500L5.500 1M2 14.500l3.500-4" stroke="#666" strokeWidth="1.300" />
      <circle cx="11.500" cy="11.500" r="3.800" fill="#5ca648" stroke="#3a7c2c" strokeWidth=".700" />
      <path d="M11.500 9.200v4.600M9.200 11.500h4.600" stroke="#fff" strokeWidth="1.400" />
    </Svg>
  ),
  note: (
    <Svg>
      <path d="M3 1.500h10.500v13H3z" fill="#fdfdfd" stroke="#556080" />
      <path d="M3 1.500h10.500" stroke="#b04848" strokeWidth="1.600" />
      <path d="M4.500 2v12.500" stroke="#7a92c8" strokeWidth="1.400" />
    </Svg>
  ),
  dt: dtLogo(false),
  dtDark: dtLogo(true),
  monitor: (
    <Svg>
      <path d="M1 1.500h13v9H1z" fill="#2a3fb4" stroke="#7d7d8c" />
      <path d="M5 11h5l1.500 3.500h-8z" fill="#c5c9d4" stroke="#888" strokeWidth=".600" />
      <path d="M15.500 1L9 8.500l-1.800.500.300-1.700L14 0z" fill="#f3b633" stroke="#a04a18" strokeWidth=".600" />
    </Svg>
  ),
  cursor,
  crossCursor: (
    <Svg>
      <path d="M8 0v16M0 8h16" stroke="#ff2a2a" strokeWidth="1.200" />
      <path d="M6.500 4v10l2.500-2.300 1.500 3.300 1.500-.700-1.500-3.300h3z" fill="#fff" stroke="#8c8c8c" strokeWidth=".900" />
    </Svg>
  ),
  cross: crossHair(null),
  crossDot: (
    <Svg>
      <path d="M8 0v16M0 8h16" stroke="#ff0000" strokeWidth="1.100" />
      <circle cx="8" cy="8" r="2.600" fill="#ff0000" />
    </Svg>
  ),
  crossSide: (
    <Svg>
      <path d="M7 0v16M0 8h12" stroke="#ff0000" strokeWidth="1.100" />
      <circle cx="12.500" cy="8" r="2.600" fill="#ff0000" />
    </Svg>
  ),
  list: (
    <Svg>
      <path d="M1 .500h14v15H1z" fill="#f4f8ff" stroke="#4f6ea3" />
      <path d="M1 3.500h14M1 6.500h14M1 9.500h14M1 12.500h14" stroke="#86a4d8" />
      <path d="M4 .500v15" stroke="#4f6ea3" />
    </Svg>
  ),
  line: (
    <Svg>
      <path d="M2.500 2.500l10.500 11" stroke="#222" />
    </Svg>
  ),
  channel: (
    <Svg>
      <path d="M2 6l8 8M2 2l12 12M6 2l8 8" stroke="#444" />
    </Svg>
  ),
  hline: (
    <Svg>
      <path d="M2 8.500h12" stroke="#111" />
    </Svg>
  ),
  vline: (
    <Svg>
      <path d="M8.500 2v12" stroke="#111" />
    </Svg>
  ),
  clipboard: (
    <Svg>
      <path d="M1.500 2h12v13.300h-12z" fill="#fff" stroke="#3f5f9f" strokeWidth="1.600" />
      <path d="M4.500 .500h6v3h-6z" fill="#9aa7bd" stroke="#5b6880" strokeWidth=".700" />
      <path d="M4 6h7M4 8.500h5M4 11h7M4 13h7" stroke="#a9b8d4" />
      <path d="M15.500 4.500L9.500 10.500l-2 .800.500-2L14 3z" fill="#f3b633" stroke="#554010" strokeWidth=".700" />
    </Svg>
  ),
  bubble: (
    <Svg>
      <path d="M8 1.500c4.200 0 7.500 2.200 7.500 5.500s-3.500 5.500-6.500 5.500l-3.500 2.500.500-2.500C3 12 .500 10 .500 7c0-3.300 3.300-5.500 7.500-5.500z" fill="#7f96cc" stroke="#3f5598" />
      <ellipse cx="7.500" cy="5.200" rx="5" ry="2.300" fill="#cfdcf6" />
    </Svg>
  ),
  arrow: (
    <Svg>
      <path d="M.500 6H9V3l6.500 5L9 13v-3H.500z" fill="#4fa02c" stroke="#3a5a30" strokeWidth=".900" />
    </Svg>
  ),
  arcs: (
    <Svg>
      <path d="M1 4c3 1 4 8 9 8h5M4 4c2 1 3 4.500 6 4.500 2 0 3-1 5-3.500" stroke="#808080" strokeWidth="1.300" />
    </Svg>
  ),
  fibs: (
    <Svg>
      <path d="M1 2h14M1 6h14M1 10h14M1 14h14" stroke="#333" strokeDasharray="1 1.500" />
    </Svg>
  ),
  fan: (
    <Svg>
      <path d="M1.500 14.500L8 3M1.500 14.500L14 1.500M1.500 14.500L15 6M1.500 14.500L14.500 9.500" stroke="#666" />
    </Svg>
  ),
  gann: (
    <Svg>
      <path d="M1 14l4-3M11.500 5L15 1M6 7h4v4H6z" stroke="#444" strokeWidth="1.300" />
    </Svg>
  ),
  fork: (
    <Svg>
      <path d="M1 15L6 2M1 15l9-13M1 15L14 2M1 15L15 7M1 15l13-4" stroke="#666" />
    </Svg>
  ),
  parallel: (
    <Svg>
      <path d="M1.500 9.500L9 2.500M3.500 13.500L14 3.500M8.500 14l6-5.500" stroke="#555" strokeWidth="1.200" />
    </Svg>
  ),
  calendar: (
    <Svg>
      <path d="M.500 .500h15v15H.500z" fill="#fff" stroke="#a0a4aa" />
      <path d="M2 2h12v3H2z" fill="#f2b632" />
      <path d="M2 5.500h12V14H2z" fill="#e8f4f8" />
      <path d="M3 7.500h4M6 10.500h4M9 12.500h4M3 12.500h3M10 7.500h3" stroke="#2d6f98" strokeWidth="1.400" />
    </Svg>
  ),
  front: (
    <Svg>
      <path d="M1.500 1.500h6v6h-6z" fill="#dcdcdc" stroke="#a5a5a5" />
      <path d="M8.500 8.500h6v6h-6z" fill="#dcdcdc" stroke="#a5a5a5" />
      <path d="M5 5h6v6H5z" fill="#c4c4c4" stroke="#989898" />
    </Svg>
  ),
  back: (
    <Svg>
      <path d="M1.500 1.500h6v6h-6zM8.500 8.500h6v6h-6z" fill="#d0d0d0" stroke="#9a9a9a" />
      <path d="M4 4h8v8H4z" fill="#dadada" stroke="#a0a0a0" />
    </Svg>
  ),
  marquee: (
    <Svg>
      <path d="M1 1h14v14H1z" stroke="#33335c" strokeWidth="1.400" strokeDasharray="1.500 1" />
    </Svg>
  ),
};

/* ---------- window chrome ---------- */

const frame = "border border-[#3399ff] bg-[#fafcff]";

function IconButton({ icon, label, active, wide }: { icon: string; label: string; active?: boolean; wide?: boolean }) {
  return (
    <button
      type="button"
      aria-label={label}
      className={"flex h-[22px] shrink-0 items-center justify-center " + (wide ? "w-[29px] gap-1 " : "w-[23px] ") + (active ? frame : "")}
    >
      {icons[icon]}
      {wide && <Caret />}
    </button>
  );
}

function Caret() {
  return (
    <svg viewBox="0 0 5 3" className="h-[3px] w-[5px] shrink-0" aria-hidden="true">
      <path d="M0 0h5L2.500 3z" fill="#000" />
    </svg>
  );
}

function TextButton({ icon, text, width, caret = true }: { icon: string; text: string; width: string; caret?: boolean }) {
  return (
    <button type="button" className={"flex h-[22px] shrink-0 items-center gap-[3px] px-0.5 " + width}>
      {icons[icon]}
      <span className="whitespace-nowrap">{text}</span>
      {caret && (
        <span className="ml-auto">
          <Caret />
        </span>
      )}
    </button>
  );
}

function Sep() {
  return <span className="mx-[3px] h-4 w-px shrink-0 bg-[#c4c4c4]" />;
}

function TitleBar({ title }: { title: string }) {
  const buttons: [string, React.ReactNode][] = [
    ["Minimize", <path key="a" d="M3 8h10v3H3z" fill="#fff" stroke="#4c5663" />],
    ["Restore", <path key="b" d="M3.500 3.500h9v8h-9zM6.500 6.500h3v2h-3z" fill="#fff" stroke="#4c5663" />],
    ["Close", <path key="c" d="M3 3.500h3L8 5.500l2-2h3L9.800 7.500l3.200 4h-3L8 9.500l-2 2H3l3.200-4z" fill="#fff" stroke="#4c5663" />],
  ];
  return (
    <header className="flex h-[26px] shrink-0 items-center gap-1 bg-linear-to-b from-[#bfcddb] to-[#d7e4f2] pl-1">
      <svg viewBox="0 0 16 16" className="size-4 shrink-0" aria-hidden="true">
        <circle cx="8" cy="8" r="7.300" fill="#fff" stroke="#3c4554" strokeWidth="1.200" />
        <path d="M7.500 3v8.500M7.500 8a2 2 0 1 0 0 1.500M10.500 4.500v6q0 1 1.500 1M9 6.500h3" fill="none" stroke="#2b3342" strokeWidth="1.300" />
      </svg>
      <h1 className="flex-1 truncate pl-0.5 text-[12px] text-[#445260]">{title}</h1>
      <div className="flex gap-[3px] pr-[10px] pt-0.5">
        {buttons.map(([label, shape]) => (
          <button key={label} type="button" aria-label={label} className="flex h-[17px] w-[30px] items-center justify-center rounded-[2px] border border-[#8394a8] bg-[#c9d7e6]">
            <svg viewBox="0 0 16 15" className="h-[15px] w-4" aria-hidden="true">
              {shape}
            </svg>
          </button>
        ))}
      </div>
    </header>
  );
}

function MenuBar() {
  return (
    <nav className="flex h-6 shrink-0 items-center gap-[18px] bg-linear-to-r from-[#f0f0f0] to-[#fbfbfb] pl-[15px] text-[12px] text-black">
      {["File", "View", "Quotes", "Trade Mode", "Insert", "Preferences", "Help"].map((m) => (
        <button key={m} type="button" className={"whitespace-nowrap " + (m === "Quotes" ? "text-[#808080]" : "")}>
          {m}
        </button>
      ))}
    </nav>
  );
}

function Overflow() {
  return (
    <button type="button" aria-label="Toolbar options" className="flex h-5 w-[11px] shrink-0 flex-col items-center justify-end gap-0.5 self-end bg-linear-to-b from-[#f4f4f4] to-[#bcbcbc] pb-1">
      <span className="h-px w-[5px] bg-black" />
      <Caret />
    </button>
  );
}

function Toolbar({ interval, id, focused, full }: { interval: string; id: string; focused?: boolean; full?: boolean }) {
  return (
    <div className="flex h-[26px] shrink-0 items-center overflow-hidden bg-linear-to-b from-white to-[#f0f0f0] text-[12px] text-black">
      <span className="ml-1 h-4 w-[3px] shrink-0 border-l-2 border-dotted border-[#b8b8b8]" />
      <span className="w-[5px] shrink-0" />
      <IconButton icon="pin" label="Pin" />
      <div className="relative mx-px h-[22px] w-[82px] shrink-0">
        <select
          id={id}
          aria-label="Interval"
          className={"h-[22px] w-full appearance-none bg-white pl-[3px] text-[12px] outline-none " + (focused ? "border border-[#3399ff]" : "border border-white")}
          defaultValue={interval}
        >
          <option>{interval}</option>
        </select>
        <span className={"pointer-events-none absolute inset-y-0 right-0 flex w-[13px] items-center justify-center " + (focused ? "border border-[#3399ff] bg-[#c4ddf6]" : "")}>
          <Caret />
        </span>
      </div>
      <IconButton icon="close" label="Remove interval" />
      <IconButton icon="props" label="Properties" />
      <IconButton icon="undo" label="Undo" />
      <IconButton icon="redo" label="Redo" />
      <TextButton icon="style" text="Style" width="w-[60px]" />
      <IconButton icon="star" label="Favorite" />
      <TextButton icon="lens" text="View" width="w-[61px]" />
      <IconButton icon="zoomIn" label="Zoom in" />
      <IconButton icon="zoomOut" label="Zoom out" />
      <IconButton icon="lens" label="Zoom" wide />
      <IconButton icon="blocks" label="Volume" />
      <Sep />
      <Sep />
      <TextButton icon="bell" text="Alerts" width="w-[63px]" />
      <IconButton icon="tree" label="Structure" />
      <Sep />
      <IconButton icon="profile" label="Profile" />
      <IconButton icon="tools" label="Add study" />
      <IconButton icon="note" label="Notes" />
      <IconButton icon="dt" label="Data window" active />
      <Sep />
      {full && (
        <>
          <TextButton icon="dtDark" text="Trade Mode" width="w-[89px]" caret={false} />
          <IconButton icon="monitor" label="Display" />
          <Sep />
          <IconButton icon="cursor" label="Pointer" />
          <IconButton icon="crossCursor" label="Cross pointer" active />
          <IconButton icon="cross" label="Crosshair" />
          <IconButton icon="crossDot" label="Crosshair with dot" />
          <IconButton icon="crossSide" label="Crosshair with side dot" />
          <IconButton icon="list" label="List" wide />
          <IconButton icon="propsColor" label="Chart properties" />
          <span className="w-[5px] shrink-0" />
        </>
      )}
      <span className={full ? "" : "flex-1"} />
      <Overflow />
    </div>
  );
}

const drawTools = ["cursor", "line", "channel", "hline", "vline", "clipboard", "bubble", "arrow", "arcs", "fibs", "fan", "gann", "fork", "parallel"];
const editTools = ["props", "calendar", "close", "front", "back", "marquee"];

function ToolStrip() {
  return (
    <aside className="flex w-6 shrink-0 flex-col gap-px bg-linear-to-r from-[#fbfbfb] to-[#ececec] pt-[5px]">
      <span className="mx-1 mb-[3px] border-t-2 border-dotted border-[#b0b0b0]" />
      {drawTools.map((t, i) => (
        <IconButton key={t} icon={t} label={"Draw " + t} active={i === 0} />
      ))}
      <span className="mx-1 mb-px mt-[3px] border-t border-[#c0c0c0]" />
      {editTools.map((t) => (
        <IconButton key={t} icon={t} label={"Edit " + t} />
      ))}
      <button type="button" aria-label="More tools" className="mt-[5px] flex h-[11px] items-center justify-end bg-linear-to-r from-[#f0f0f0] to-[#b8b8b8] pr-1">
        <svg viewBox="0 0 8 8" className="size-2" aria-hidden="true">
          <path d="M1 1v6M4 1l3 3-3 3z" stroke="#000" fill="#000" />
        </svg>
      </button>
    </aside>
  );
}

/* ---------- charts ---------- */

const toPoints = (p: number[] | string) => (typeof p === "string" ? p : p.map((y, i) => i + "," + y).join(" "));

function Plot({ panel, chart }: { panel: PanelData; chart: ChartData }) {
  const { top, bottom } = panel;
  const columns: number[] = [];
  for (let c = 0; c <= chart.count; c += chart.columnStep) columns.push(c);
  const ns = "non-scaling-stroke" as const;
  return (
    <svg viewBox={`0 ${top} ${chart.count} ${bottom - top}`} preserveAspectRatio="none" className="absolute inset-0 h-full w-full" role="img" aria-label={panel.title}>
      <g stroke="#d8d8d8" shapeRendering="crispEdges">
        {columns.map((c) => (
          <line key={c} x1={c} x2={c} y1={top} y2={bottom} vectorEffect={ns} />
        ))}
        {panel.rows.map((r) => (
          <line key={r} x1={0} x2={chart.count} y1={r} y2={r} vectorEffect={ns} />
        ))}
      </g>
      {panel.levels?.filter((l) => l.kind === "dash").map((l) => (
        <line key={l.y} x1={0} x2={chart.count} y1={l.y} y2={l.y} stroke="#777" strokeDasharray="3 1 1 1" vectorEffect={ns} shapeRendering="crispEdges" />
      ))}
      {panel.bars && (
        <g fill={panel.bars.color} shapeRendering="crispEdges">
          {panel.bars.ends.map((e, i) => {
            const base = panel.bars!.base;
            return <rect key={i} x={i - 0.28} width={0.56} y={Math.min(e, base)} height={Math.abs(e - base)} />;
          })}
        </g>
      )}
      {panel.levels?.filter((l) => l.kind !== "dash").map((l) => (
        <line
          key={l.y}
          x1={0}
          x2={chart.count}
          y1={l.y}
          y2={l.y}
          stroke={l.kind === "soft" ? "#e05050" : RED}
          strokeWidth={l.kind === "soft" ? 2 : 1}
          vectorEffect={ns}
          shapeRendering="crispEdges"
        />
      ))}
      {panel.candles && (
        <g stroke="#000" shapeRendering="crispEdges">
          {panel.candles.map(([high, open, close, low, c], i) => (
            <g key={i}>
              <line x1={i} x2={i} y1={high} y2={low} vectorEffect={ns} />
              <rect x={i - 0.3} width={0.6} y={open} height={close - open} fill={c === "g" ? "#0a800a" : RED} vectorEffect={ns} />
            </g>
          ))}
        </g>
      )}
      {panel.lines?.map((l, i) => (
        <polyline
          key={i}
          points={toPoints(l.points)}
          fill="none"
          stroke={l.color}
          strokeWidth={l.width ?? 1}
          strokeLinejoin="round"
          strokeDasharray={l.dash ? "3 1" : undefined}
          shapeRendering={l.dash ? "crispEdges" : undefined}
          vectorEffect={ns}
        />
      ))}
      <line x1={chart.cross} x2={chart.cross} y1={top} y2={bottom} stroke={RED} vectorEffect={ns} shapeRendering="crispEdges" />
    </svg>
  );
}

const small = "font-['Liberation_Sans',Arial,sans-serif] text-[10px] leading-[12px]";

function Panel({ panel, chart, first }: { panel: PanelData; chart: ChartData; first: boolean }) {
  const span = panel.bottom - panel.top;
  const at = (y: number) => ({ top: ((y - panel.top) / span) * 100 + "%" });
  return (
    <section className="flex min-h-0 basis-0 pl-1" style={{ flexGrow: span }}>
      <div className="relative min-w-0 flex-1">
        <Plot panel={panel} chart={chart} />
        <h2 className={"relative pl-1 text-[#555] " + (first ? "pt-[6px] " : "pt-[3px] ") + small}>{panel.title}</h2>
      </div>
      <div className={"relative shrink-0 overflow-hidden border-l border-[#d8d8d8] text-black " + chart.axis + " " + small}>
        {panel.marks.map((m) => (
          <span key={m.text} className="absolute left-0.5 -translate-y-1/2 whitespace-nowrap" style={at(m.y)}>
            {m.text}
          </span>
        ))}
        {panel.tags.map((t) => (
          <span key={t.text} className="absolute left-0 w-10 -translate-y-1/2 text-[#d0d0d0]" style={{ ...at(t.y), backgroundColor: t.color }}>
            {t.text}
          </span>
        ))}
      </div>
    </section>
  );
}

function Divider() {
  return (
    <div className="h-1 shrink-0 border-t border-[#6a6a6a] bg-[#cfcfcf] pt-px">
      <div className="h-px bg-white" />
    </div>
  );
}

function Legend({ chart }: { chart: ChartData }) {
  return (
    <div className={"absolute top-0 z-10 border border-[#606060] bg-[#b2b2b2] " + chart.legendPos}>
      <div className="h-[5px] bg-[#9ab2cc]" />
      <table className={"mb-px mr-[6px] border-collapse text-right " + small}>
        <tbody>
          {chart.legend.map((row, r) => (
            <tr key={r} className="h-[14px]">
              {row.map(([label, value, color], c) => (
                <React.Fragment key={c}>
                  <th scope="row" className={"whitespace-nowrap p-0 font-normal " + chart.legendCols[c * 2]} style={{ color }}>
                    {label}
                  </th>
                  <td className={"whitespace-nowrap p-0 " + chart.legendCols[c * 2 + 1]} style={{ color }}>
                    {value}
                  </td>
                </React.Fragment>
              ))}
            </tr>
          ))}
        </tbody>
      </table>
    </div>
  );
}

function TimeAxis({ chart }: { chart: ChartData }) {
  const at = (i: number) => ({ left: (i / chart.count) * 100 + "%" });
  return (
    <div className={"flex h-[14px] shrink-0 border-b border-white pl-1 text-black " + small}>
      <div className="relative flex-1">
        {chart.times.map(([i, t]) => (
          <span key={t} className="absolute top-px -translate-x-1/2" style={at(i)}>
            {t}
          </span>
        ))}
        <span className="absolute top-px -translate-x-1/2 whitespace-nowrap bg-[#ff0000] px-px text-[#e0c8c8]" style={at(chart.cross)}>
          {chart.crossTime}
        </span>
      </div>
      <div className={"shrink-0 " + chart.axis} />
    </div>
  );
}

function ChartWindow({ title, interval, id, chart, className, active }: { title: string; interval: string; id: string; chart: ChartData; className: string; active?: boolean }) {
  return (
    <article className={"flex min-w-0 flex-col border-l border-[#3a3f46] bg-[#d7e4f2] " + className}>
      <TitleBar title={title} />
      <div className="ml-[3px] mr-2 flex min-h-0 flex-1 flex-col bg-[#f0f0f0]">
        <MenuBar />
        <Toolbar interval={interval} id={id} focused={active} full={active} />
        <div className="flex min-h-0 flex-1">
          <ToolStrip />
          <main className="relative flex min-w-0 flex-1 flex-col bg-[#b2b2b2]">
            <Legend chart={chart} />
            <button type="button" aria-label="Expand" className="absolute right-0 top-px z-0 flex h-[10px] items-center bg-[#d4d8e0] text-[#4a68a0]">
              <svg viewBox="0 0 14 10" className="h-[10px] w-[14px]" aria-hidden="true">
                <path d="M6 0L1 5l5 5M10 0L5 5l5 5M14 0L9 5l5 5" fill="none" stroke="currentColor" strokeWidth="1.600" />
              </svg>
            </button>
            {chart.panels.map((p, i) => (
              <React.Fragment key={p.title}>
                {i > 0 && <Divider />}
                <Panel panel={p} chart={chart} first={i === 0} />
              </React.Fragment>
            ))}
            <TimeAxis chart={chart} />
          </main>
        </div>
      </div>
    </article>
  );
}

export default function App() {
  return (
    <div className="grid h-screen min-h-[600px] grid-cols-[740fr_1140fr] overflow-hidden bg-[#d7e4f2] font-['Lato',sans-serif]">
      <ChartWindow title="GCLU3: 20 minutes (Basic)" interval="20 minutes" id="interval-left" chart={leftChart} className="-ml-[25px]" />
      <ChartWindow title="GCLU3: 4 ticks (r) (Basic)" interval="4 ticks (r)" id="interval-right" chart={rightChart} className="-mr-3" active />
    </div>
  );
}
